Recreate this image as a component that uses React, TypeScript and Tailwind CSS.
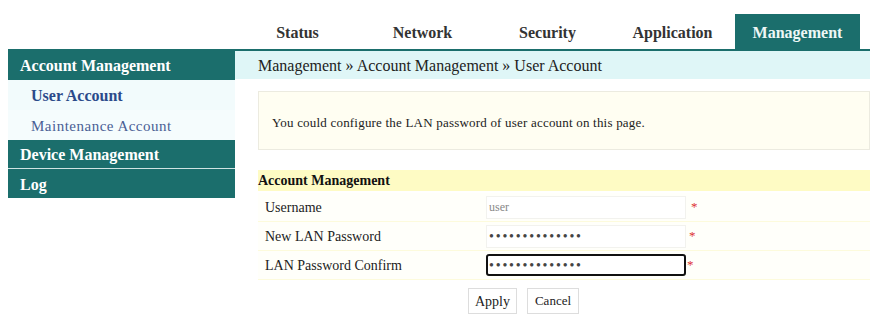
const tabs = ["Status", "Network", "Security", "Application", "Management"];

function Row({
  label,
  children,
}: {
  label: string;
  children: React.ReactNode;
}) {
  return (
    <div className="flex h-[29px] items-center border-b border-[#fdfbdc] bg-[#fffffa]">
      <div className="w-[228px] pl-[7px] text-[14px] text-[#222]">{label}</div>
      <div className="flex items-center">{children}</div>
    </div>
  );
}

export default function App() {
  return (
    <div className="h-[323px] w-[870px] overflow-hidden bg-white font-['Liberation_Serif','Times_New_Roman',serif]">
      {/* top tabs */}
      <div className="flex h-[49px] items-end pl-[235px]">
        {tabs.map((t) => (
          <div
            key={t}
            className={
              t === "Management"
                ? "flex h-[35px] w-[125px] items-center justify-center bg-[#1b6e6c] pt-[2px] text-[16px] font-bold text-[#eef7f6]"
                : "flex h-[35px] w-[125px] items-center justify-center pt-[2px] text-[16px] font-bold text-[#333]"
            }
          >
            {t}
          </div>
        ))}
      </div>

      <div className="flex">
        {/* sidebar */}
        <aside className="ml-[8px] w-[227px] shrink-0">
          <div className="flex h-[31px] items-center bg-[#1b6e6c] pl-[12px] pt-[3px] text-[16px] font-bold text-white">
            Account Management
          </div>
          <div className="flex h-[30px] items-center bg-[#f2fbfc] pl-[23px] pt-[2px] text-[16px] font-bold text-[#2a4a8a]">
            User Account
          </div>
          <div className="flex h-[30px] items-center bg-[#f5fcfd] pl-[23px] pt-[2px] text-[15px] tracking-[0.5px] text-[#4a5f95]">
            Maintenance Account
          </div>
          <div className="flex h-[29px] items-center border-b border-[#cfe3e2] bg-[#1b6e6c] pl-[12px] pt-[2px] text-[16px] font-bold text-white">
            Device Management
          </div>
          <div className="flex h-[29px] items-center bg-[#1b6e6c] pl-[12px] pt-[2px] text-[16px] font-bold text-white">
            Log
          </div>
        </aside>

        {/* main */}
        <main className="flex-1">
          <div className="border-t-2 border-[#1b6e6c] bg-[#dff6f7]">
            <div className="flex h-[28px] items-center pl-[23px] pt-[1px] text-[16px] text-[#222]">
              Management » Account Management » User Account
            </div>
          </div>

          <div className="pl-[23px]">
            <div className="mt-[12px] flex h-[59px] items-center border border-[#ecebe0] bg-[#fffef2] pl-[13px] pt-[4px] text-[13px] tracking-[0.2px] text-[#222]">
              You could configure the LAN password of user account on this page.
            </div>

            <div className="mt-[20px] flex h-[21px] items-center bg-[#fefbc4] text-[14px] font-bold text-[#111]">
              Account Management
            </div>

            <div className="mt-[2px]">
              <Row label="Username">
                <div className="flex h-[23px] w-[200px] items-center border border-[#f2f2ee] bg-white pl-[2px] text-[12px] text-[#888]">
                  user
                </div>
                <span className="ml-[5px] text-[13px] text-[#d33]">*</span>
              </Row>
              <Row label="New LAN Password">
                <div className="flex h-[23px] w-[200px] items-center border border-[#f2f2ee] bg-white pl-[2px] text-[14px] tracking-[1.8px] text-[#444]">
                  ••••••••••••••
                </div>
                <span className="ml-[3px] text-[13px] text-[#d33]">*</span>
              </Row>
              <Row label="LAN Password Confirm">
                <div className="flex h-[22px] w-[200px] items-center rounded-[3px] border-2 border-[#111] bg-white pl-[1px] text-[14px] tracking-[1.8px] text-[#444]">
                  ••••••••••••••
                </div>
                <span className="ml-[1px] text-[13px] text-[#d33]">*</span>
              </Row>
            </div>

            <div className="mt-[8px] flex gap-[10px] pl-[210px]">
              <button className="h-[26px] w-[49px] border border-[#ddd] bg-white text-[14px] text-[#222]">
                Apply
              </button>
              <button className="h-[26px] w-[52px] border border-[#ddd] bg-white text-[13px] text-[#222]">
                Cancel
              </button>
            </div>
          </div>
        </main>
      </div>
    </div>
  );
}
